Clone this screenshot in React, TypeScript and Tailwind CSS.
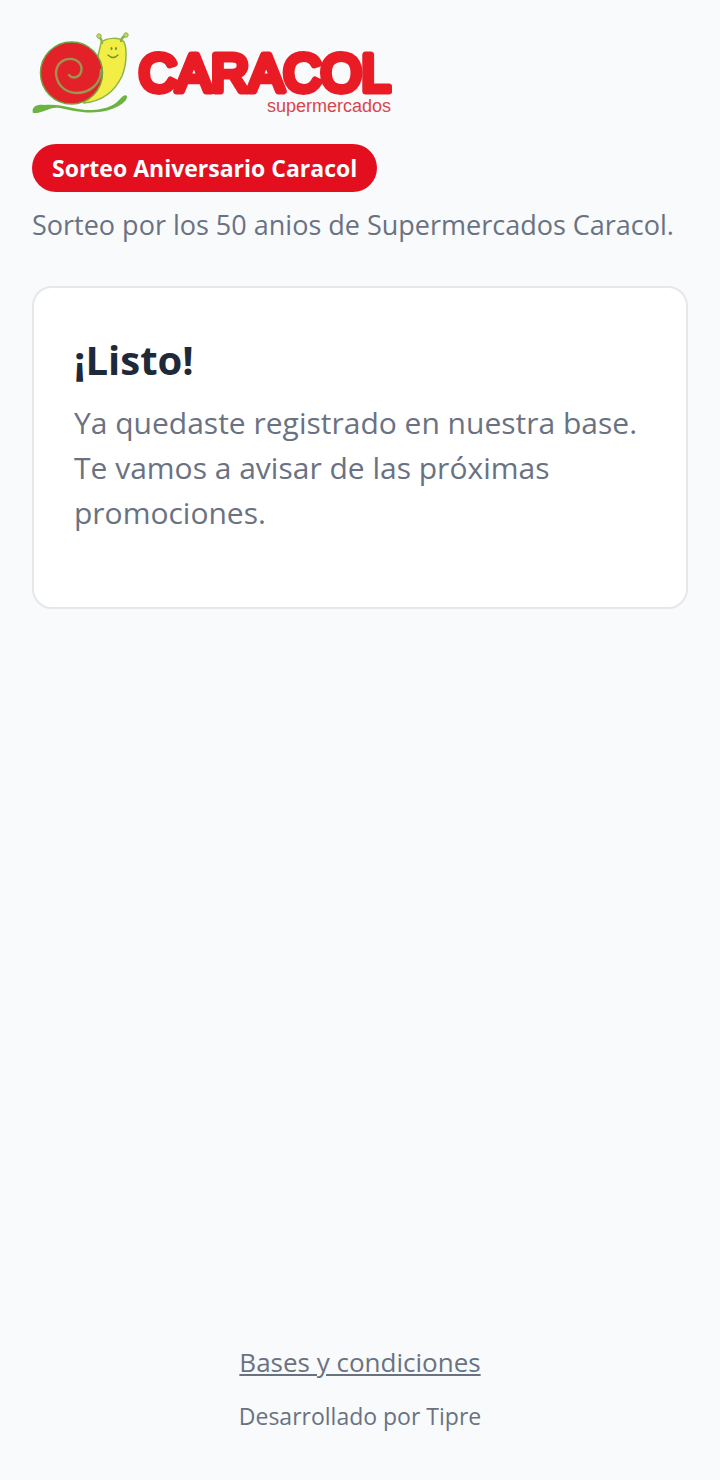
function CaracolLogo() {
  return (
    <svg viewBox="0 0 360 88" className="block w-full max-w-90" role="img" aria-label="Caracol supermercados">
      {/* body */}
      <path
        d="M69 11C74 5 88 5 92 10C95 16 95 32 90 44C84 57 72 69 52 71L60 50Z"
        fill="#f3ee45"
        stroke="#8fb548"
        strokeWidth="1.5"
      />
      <g fill="none" stroke="#8ab54a" strokeWidth="2.4" strokeLinecap="round">
        <path d="M70 11Q70 7 67 5" />
        <path d="M89 9Q90 5 93 4" />
      </g>
      <circle cx="67" cy="4" r="2.2" fill="#c5d860" stroke="#8ab54a" />
      <circle cx="94" cy="3" r="2.2" fill="#c5d860" stroke="#8ab54a" />
      <ellipse cx="79.5" cy="16.5" rx="1" ry="1.6" fill="#648f2d" />
      <ellipse cx="84" cy="16.5" rx="1" ry="1.6" fill="#648f2d" />
      <path d="M76 23Q81 28 86 23" fill="none" stroke="#72902d" strokeWidth="1.3" strokeLinecap="round" />

      {/* shell */}
      <circle cx="39.5" cy="41" r="31" fill="#e32128" stroke="#72a043" strokeWidth="1.5" />
      <path
        d="M69 38C69 52 58 61 44 61C31 60 24 51 24 40C25 31 32 26 40 27C47 28 51 34 49 40C47 46 40 47 37 43"
        fill="none"
        stroke="#9c9450"
        strokeWidth="2.4"
        strokeLinecap="round"
      />

      {/* trail */}
      <path
        d="M1 81C-1 75 5 72 12 73C30 71 45 79 61 78C76 77 84 72 88 67C91 63 95 62 95 65C95 69 88 74 80 77C60 84 42 79 28 76C18 74 10 82 1 81Z"
        fill="#6db33f"
      />

      <text
        x="107"
        y="59"
        fontSize="52"
        fill="#e91c26"
        stroke="#e91c26"
        strokeWidth="7"
        strokeLinejoin="round"
        className="font-['Liberation_Sans',sans-serif]"
      >
        CARACOL
      </text>
      <text
        x="359"
        y="80"
        fontSize="18"
        textAnchor="end"
        fill="#d8464a"
        className="font-['Liberation_Sans',sans-serif]"
      >
        supermercados
      </text>
    </svg>
  );
}

export default function App() {
  return (
    <div className="flex min-h-screen flex-col bg-[#f8fafc] px-8 pt-8 pb-12 font-['Open_Sans','Noto_Sans',sans-serif] text-gray-500">
      <header className="flex flex-col items-start">
        <CaracolLogo />
        <span className="mt-6 rounded-full bg-[#e30f1f] px-5 py-2 text-[23px] leading-8 font-bold text-white">
          Sorteo Aniversario Caracol
        </span>
        <p className="mt-3 text-[27px] leading-[42px]">Sorteo por los 50 anios de Supermercados Caracol.</p>
      </header>

      <main className="mt-10 rounded-[20px] border-2 border-gray-200 bg-white px-10 pt-10 pb-18">
        <h1 className="text-[40px] leading-16 font-bold text-gray-800">¡Listo!</h1>
        <p className="mt-2 text-[30px] leading-[45px]">
          Ya quedaste registrado en nuestra base. Te vamos a avisar de las próximas promociones.
        </p>
      </main>

      <footer className="mt-auto flex flex-col items-center gap-5">
        <a href="#bases" className="text-[26px] leading-9 underline">
          Bases y condiciones
        </a>
        <p className="text-[23px] leading-8">Desarrollado por Tipre</p>
      </footer>
    </div>
  );
}
